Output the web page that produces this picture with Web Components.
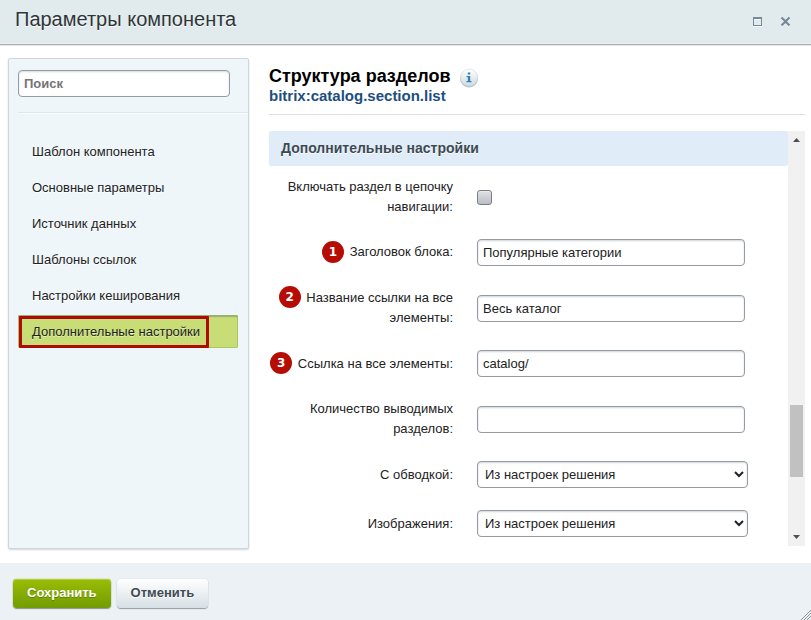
<!DOCTYPE html>
<html lang="ru">
<head>
<meta charset="utf-8">
<title>Параметры компонента</title>
<style>
  html, body { margin: 0; }
  body { font-family: "Liberation Sans", Arial, sans-serif; font-size: 13px; color: #222; background: #fff; }
</style>
</head>
<body>
<component-dialog>
  <dialog-header slot="header">Параметры компонента</dialog-header>
  <settings-nav slot="nav">
    <nav-item>Шаблон компонента</nav-item>
    <nav-item>Основные параметры</nav-item>
    <nav-item>Источник данных</nav-item>
    <nav-item>Шаблоны ссылок</nav-item>
    <nav-item>Настройки кеширования</nav-item>
    <nav-item active>Дополнительные настройки</nav-item>
  </settings-nav>
  <component-title slot="title" code="bitrix:catalog.section.list">Структура разделов</component-title>
  <settings-section heading="Дополнительные настройки">
    <form-field type="checkbox" label="Включать раздел в цепочку навигации:"></form-field>
    <form-field badge="1" label="Заголовок блока:" value="Популярные категории"></form-field>
    <form-field badge="2" label="Название ссылки на все элементы:" value="Весь каталог"></form-field>
    <form-field badge="3" label="Ссылка на все элементы:" value="catalog/"></form-field>
    <form-field label="Количество выводимых разделов:" value=""></form-field>
    <form-field type="select" label="С обводкой:" value="Из настроек решения"></form-field>
    <form-field type="select" label="Изображения:" value="Из настроек решения"></form-field>
  </settings-section>
  <scroll-track slot="scroll"></scroll-track>
  <dialog-footer slot="footer">
    <push-button primary>Сохранить</push-button>
    <push-button>Отменить</push-button>
  </dialog-footer>
</component-dialog>

<script>
function define(name, render) {
  customElements.define(name, class extends HTMLElement {
    connectedCallback() {
      if (this.shadowRoot) return;
      this.attachShadow({ mode: "open" }).innerHTML = render(this);
    }
  });
}

define("component-dialog", () => `
  <style>
    :host { display: flex; flex-direction: column; min-height: 100vh; }
    .body { flex: 1; display: flex; gap: 20px; padding: 13px 6px 14px 8px; }
    .nav { flex: 0 0 241px; display: flex; }
    main { flex: 1; min-width: 0; display: flex; flex-direction: column; padding-bottom: 3px; }
    .view { flex: 1; display: flex; margin-top: 16px; }
    .content { flex: 1; min-width: 0; }
  </style>
  <slot name="header"></slot>
  <div class="body">
    <div class="nav"><slot name="nav"></slot></div>
    <main>
      <slot name="title"></slot>
      <div class="view">
        <div class="content"><slot></slot></div>
        <slot name="scroll"></slot>
      </div>
    </main>
  </div>
  <slot name="footer"></slot>`);

define("dialog-header", () => `
  <style>
    :host { display: block; background: #e1eaed; border-bottom: 1px solid #a9b0b5; box-shadow: 0 1px 0 #e4e8ea, inset 0 -1px 0 #edf1f3; }
    header { display: flex; align-items: center; height: 44px; padding: 0 19px 0 15px; }
    h1 { flex: 1; margin: 0; padding-bottom: 6px; font-size: 20px; line-height: 24px; font-weight: 400; color: #2f3537; text-shadow: 0 1px #fff; }
    .tools { display: flex; gap: 16px; }
    button { border: 0; padding: 0; background: none; width: 12px; height: 12px; }
    svg { display: block; }
  </style>
  <header>
    <h1><slot></slot></h1>
    <div class="tools">
      <button type="button" aria-label="Развернуть"><svg width="12" height="12" viewBox="0 0 12 12"><path d="M1 10.500h9M2.500 3.500h6" stroke="#f6f9fa" fill="none"/><path d="M1 1h9v9H1zM2 3v6h7V3z" fill="#76899b" fill-rule="evenodd"/></svg></button>
      <button type="button" aria-label="Закрыть"><svg width="12" height="12" viewBox="0 0 12 12"><path d="M1.500 2.500l8 8M9.500 2.500l-8 8" stroke="#f6f9fa" stroke-width="2"/><path d="M1.500 1.500l8 8M9.500 1.500l-8 8" stroke="#76899b" stroke-width="2.200"/></svg></button>
    </div>
  </header>`);

define("settings-nav", () => `
  <style>
    :host { display: block; flex: 1; box-sizing: border-box; background: #eef6fa; border: 1px solid #cfd7dc; border-radius: 2px; box-shadow: 0 1px 2px #cdd5da; }
    .search { margin-left: 9px; padding: 11px 18px 15px 0; border-bottom: 1px solid #dfe7eb; box-shadow: 0 1px #f8fbfd; }
    input { display: block; box-sizing: border-box; width: 100%; height: 27px; padding: 0 5px; font: bold 13px "Liberation Sans", Arial, sans-serif; color: #333; background: #fff; border: 1px solid #959ba6; border-radius: 4px; box-shadow: inset 0 1px 2px #d5dade; }
    input::placeholder { color: #757575; opacity: 1; }
    nav { display: flex; flex-direction: column; gap: 3px; padding: 22px 10px 0 9px; }
  </style>
  <div class="search"><input type="search" placeholder="Поиск" aria-label="Поиск"></div>
  <nav><slot></slot></nav>`);

define("nav-item", () => `
  <style>
    :host { display: block; }
    a { display: flex; align-items: center; box-sizing: border-box; height: 33px; padding-left: 14px; color: #222; text-decoration: none; text-shadow: 0 1px #fff; border-radius: 2px; }
    :host([active]) a { background: #c8dd75; box-shadow: inset 0 2px 1px #98b06a, inset 0 0 0 1px #adc760; text-shadow: 0 1px #e4efb7; }
    :host([active]) span::after { content: ""; position: absolute; inset: -8px -9px -8px -13px; border: 3px solid #ae0b05; border-radius: 1px; }
    span { position: relative; line-height: 16px; }
  </style>
  <a href="#"><span><slot></slot></span></a>`);

define("component-title", el => `
  <style>
    :host { display: block; padding: 6px 0 10px; border-bottom: 1px solid #dfe2e5; }
    .row { display: flex; align-items: center; gap: 8px; height: 23px; }
    h2 { margin: 0; font-size: 18px; line-height: 22px; color: #000; }
    p { margin: 0; font-size: 15px; line-height: 17px; font-weight: 700; color: #1c4f80; }
    button { border: 0; padding: 0; background: none; width: 20px; height: 20px; margin-top: 4px; }
    svg { display: block; }
  </style>
  <div class="row"><h2><slot></slot></h2>
    <button type="button" aria-label="Информация"><svg width="20" height="20" viewBox="0 0 20 20">
      <defs><linearGradient id="g" x2="0" y2="1"><stop stop-color="#fff"/><stop offset="1" stop-color="#cfdbe1"/></linearGradient></defs>
      <circle cx="10" cy="10.500" r="9" fill="#b3bec4"/><circle cx="10" cy="9.500" r="8.500" fill="url(#g)" stroke="#d3dce1" stroke-width=".6"/>
      <path d="M8.800 4.500h2.400v2H8.800zM7.500 8h3.700v5h1.300v1.300H7.500V13h1.400V9.300H7.500z" fill="#3382b4"/></svg></button>
  </div>
  <p>${el.getAttribute("code")}</p>`);

define("settings-section", el => `
  <style>
    :host { display: block; }
    h3 { margin: 0; padding: 0 12px; font-size: 14px; line-height: 35px; color: #3c4a54; background: #e0ecf7; border-radius: 2px; text-shadow: 0 1px #fff; }
  </style>
  <h3>${el.getAttribute("heading")}</h3>
  <slot></slot>`);

define("form-field", el => {
  const type = el.getAttribute("type") || "text";
  const value = el.getAttribute("value") || "";
  const badge = el.getAttribute("badge");
  const control = type === "select"
    ? `<select id="c"><option>${value}</option></select>`
    : `<input id="c" type="${type}" value="${value}">`;
  return `
  <style>
    :host { display: grid; grid-template-columns: 184px minmax(0, 1fr); column-gap: 24px; align-items: center; padding: 11px 40px 11px 0; }
    :host(:last-child) { padding-bottom: 0; }
    label { text-align: right; line-height: 20px; }
    .badge { display: inline-block; width: 22px; height: 22px; margin: -3px 2px 0 0; vertical-align: middle; border-radius: 50%; background: #b50d04; color: #fff; font: bold 12px/22px "DejaVu Sans", sans-serif; text-align: center; }
    input, select { box-sizing: border-box; height: 27px; margin: 0; font: 13px "Liberation Sans", Arial, sans-serif; color: #222; background: #fff; border: 1px solid #959ba0; border-radius: 4px; box-shadow: inset 0 1px 2px #cfd6d9; }
    input { width: calc(100% - 3px); padding: 0 5px; }
    select { width: 100%; padding: 0 3px; color: #222; }
    input[type=checkbox] { appearance: none; display: block; width: 15px; height: 15px; background: linear-gradient(#dfe2e5, #b9bec5); border-color: #777d85; border-radius: 3px; box-shadow: inset 0 1px #e8ebed; }
  </style>
  <label for="c">${badge ? `<span class="badge">${badge}</span> ` : ""}${el.getAttribute("label")}</label>
  ${control}`;
});

define("scroll-track", () => `
  <style>
    :host { display: flex; flex-direction: column; align-items: center; flex: 0 0 17px; background: #f1f1f1; }
    svg { display: block; flex: 0 0 17px; }
    .before { flex: 257; }
    .thumb { flex: 72; width: 13px; background: #c1c1c1; }
    .after { flex: 52; }
  </style>
  <svg width="17" height="17" viewBox="0 0 17 17"><path d="M5 11l3.500-4 3.500 4z" fill="#505050"/></svg>
  <div class="before"></div><div class="thumb"></div><div class="after"></div>
  <svg width="17" height="17" viewBox="0 0 17 17"><path d="M5 6l3.500 4 3.500-4z" fill="#505050"/></svg>`);

define("dialog-footer", () => `
  <style>
    :host { display: flex; justify-content: space-between; background: #ebf1f4; }
    .actions { display: flex; gap: 6px; padding: 16px 13px 12px; }
    svg { align-self: flex-end; display: block; }
  </style>
  <div class="actions"><slot></slot></div>
  <svg width="10" height="10" viewBox="0 0 10 10"><path d="M0 10L10 0M3 10l7-7M6 10l4-4" stroke="#8f9699" fill="none"/></svg>`);

define("push-button", () => `
  <style>
    :host { display: block; }
    button { height: 29px; padding: 0 14px 2px; border: 0; border-radius: 4px; font: bold 13px "Liberation Sans", Arial, sans-serif; color: #3f4b54; background: linear-gradient(#fff, #d6e0e4); box-shadow: 0 0 1px #b5c0c5, 0 1px 1px #8d989e; text-shadow: 0 1px #fff; }
    :host([primary]) button { color: #fff; background: linear-gradient(#9abd06, #729c00); box-shadow: inset 0 1px #b6d12b, 0 0 1px #5f8200, 0 1px 1px #8d989e; text-shadow: 0 1px #5f8200; }
  </style>
  <button type="button"><slot></slot></button>`);
</script>
</body>
</html>
